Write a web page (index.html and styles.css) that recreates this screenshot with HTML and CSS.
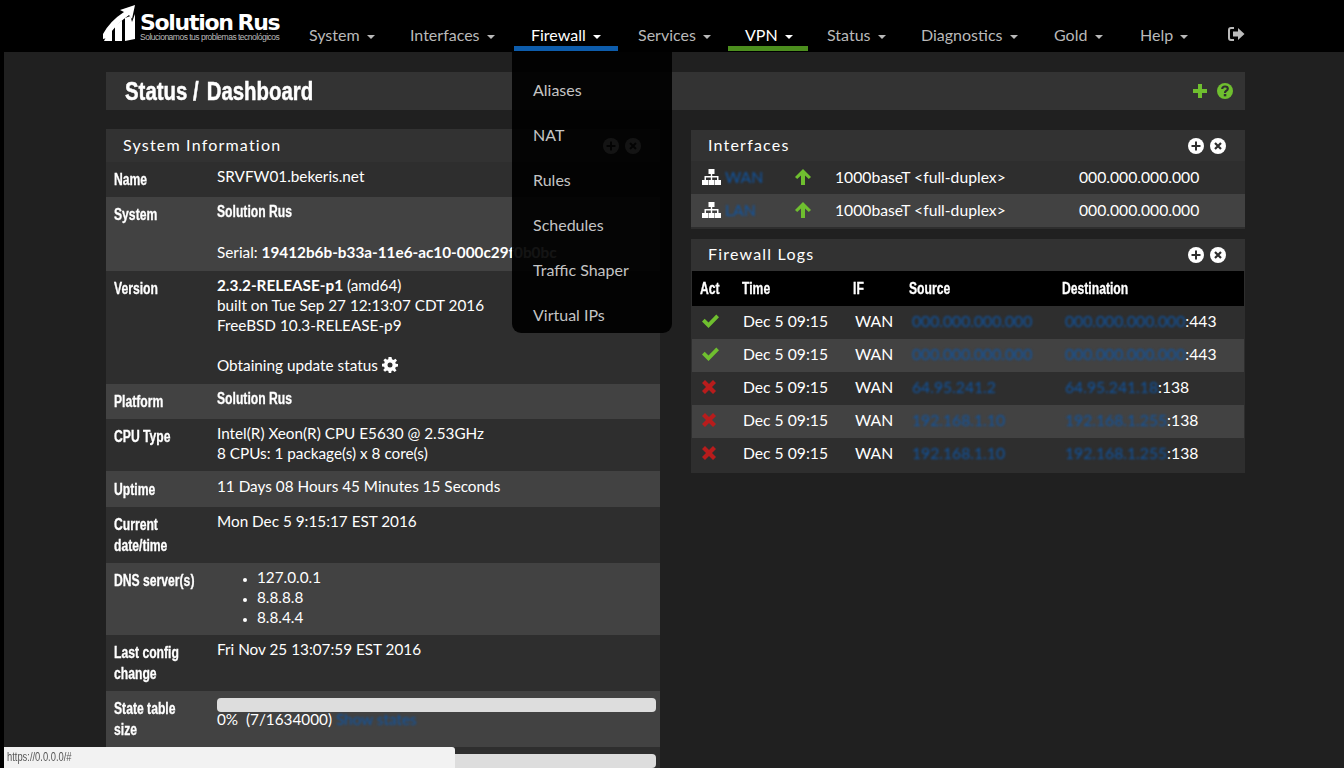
FILE: index.html
```html
<!DOCTYPE html>
<html lang="en">
<head>
    <meta charset="UTF-8">
    <meta name="viewport" content="width=device-width, initial-scale=1.0">
    <title>Status / Dashboard</title>
    <link rel="stylesheet" href="styles.css">
</head>
<body>
    <header class="topbar">
        <a class="logo" href="#">
            <svg class="logo-mark" width="33" height="37" viewBox="0 0 33 37">
                <path fill="#fff" d="M0 29 Q7 16 21 7 L17 5 L32 0 L29 14 L26 10 Q12 20 4 33 L0 34 Z"/>
                <path fill="#fff" d="M1 36 L2 34 Q5 28 9 24 V36 Z M12 36 V21 L19 15.500 V36 Z M22 36 V13 L27.500 11 L29 17 L32 9 V34 Z"/>
            </svg>
            <span class="logo-text">
                <span class="logo-name">Solution<span class="logo-rus">Rus</span></span>
                <span class="logo-tag">Solucionamos tus problemas tecnológicos</span>
            </span>
        </a>
        <nav class="menu">
            <a class="menu-item" href="#">System <i class="caret"></i></a>
            <a class="menu-item" href="#">Interfaces <i class="caret"></i></a>
            <a class="menu-item is-open" href="#">Firewall <i class="caret"></i></a>
            <a class="menu-item" href="#">Services <i class="caret"></i></a>
            <a class="menu-item is-vpn" href="#">VPN <i class="caret"></i></a>
            <a class="menu-item" href="#">Status <i class="caret"></i></a>
            <a class="menu-item" href="#">Diagnostics <i class="caret"></i></a>
            <a class="menu-item" href="#">Gold <i class="caret"></i></a>
            <a class="menu-item" href="#">Help <i class="caret"></i></a>
            <a class="menu-item menu-exit" href="#">
                <svg width="17" height="14" viewBox="0 0 17 14">
                    <path fill="none" stroke="#bbb" stroke-width="2" d="M6 1 H3 Q1 1 1 3 V11 Q1 13 3 13 H6"/>
                    <path fill="#bbb" d="M5 4.500 H10 V1 L16.500 7 L10 13 V9.500 H5 Z"/>
                </svg>
            </a>
        </nav>
    </header>

    <div class="dropdown">
        <a href="#">Aliases</a>
        <a href="#">NAT</a>
        <a href="#">Rules</a>
        <a href="#">Schedules</a>
        <a href="#">Traffic Shaper</a>
        <a href="#">Virtual IPs</a>
    </div>

    <main class="page">
        <div class="titlebar">
            <h1>Status / <span class="crumb">Dashboard</span></h1>
            <div class="title-icons">
                <svg width="16" height="16" viewBox="0 0 16 16"><path fill="#6fbf2f" d="M6 1 H10 V6 H15 V10 H10 V15 H6 V10 H1 V6 H6 Z"/></svg>
                <svg width="16" height="16" viewBox="0 0 16 16"><circle cx="8" cy="8" r="8" fill="#6fbf2f"/><path fill="none" stroke="#2f2f2f" stroke-width="2.200" d="M5.200 6 Q5.400 3.500 8 3.500 Q10.800 3.500 10.800 5.800 Q10.800 7.200 9 8 Q8 8.500 8 10"/><rect x="6.800" y="11" width="2.500" height="2.300" fill="#2f2f2f"/></svg>
            </div>
        </div>

        <div class="columns">
            <section class="panel">
                <div class="panel-head">
                    <h2>System Information</h2>
                    <div class="panel-icons">
                        <svg width="16" height="16" viewBox="0 0 16 16"><circle cx="8" cy="8" r="8" fill="#fff"/><path fill="#2e2e2e" d="M7 3.500 H9 V7 H12.500 V9 H9 V12.500 H7 V9 H3.500 V7 H7 Z"/></svg>
                        <svg width="16" height="16" viewBox="0 0 16 16"><circle cx="8" cy="8" r="8" fill="#fff"/><path stroke="#2e2e2e" stroke-width="2.200" d="M5 5 L11 11 M11 5 L5 11"/></svg>
                    </div>
                </div>
                <div class="info-row">
                    <div class="info-label">Name</div>
                    <div>SRVFW01.bekeris.net</div>
                </div>
                <div class="info-row">
                    <div class="info-label">System</div>
                    <div><span class="cond">Solution Rus</span><br><br>Serial: <b>19412b6b-b33a-11e6-ac10-000c29f0b0bc</b></div>
                </div>
                <div class="info-row">
                    <div class="info-label">Version</div>
                    <div>
                        <b>2.3.2-RELEASE-p1</b> (amd64)<br>
                        built on Tue Sep 27 12:13:07 CDT 2016<br>
                        FreeBSD 10.3-RELEASE-p9<br><br>
                        Obtaining update status
                        <svg class="gear" width="16" height="16" viewBox="0 0 16 16">
                            <path fill="#fff" fill-rule="evenodd" d="M6.500 0 H9.500 L10 2.300 L11.500 3 L13.600 1.800 L15 3.800 L13.300 5.300 L13.700 6.800 L16 7 V9.500 L13.700 10 L13.200 11.400 L14.500 13.400 L12.600 15 L10.900 13.400 L9.500 14 L9.200 16 H6.800 L6.300 14 L4.900 13.400 L3 14.800 L1.200 12.900 L2.700 11.200 L2.100 9.800 L0 9.400 V6.800 L2.200 6.400 L2.800 5 L1.400 3.200 L3.200 1.500 L5.100 2.800 L6.300 2.200 Z M8 5.500 A2.500 2.500 0 1 0 8 10.500 A2.500 2.500 0 1 0 8 5.500 Z"/>
                        </svg>
                    </div>
                </div>
                <div class="info-row">
                    <div class="info-label">Platform</div>
                    <div><span class="cond">Solution Rus</span></div>
                </div>
                <div class="info-row row-tight">
                    <div class="info-label">CPU Type</div>
                    <div>Intel(R) Xeon(R) CPU E5630 @ 2.53GHz<br>8 CPUs: 1 package(s) x 8 core(s)</div>
                </div>
                <div class="info-row row-loose">
                    <div class="info-label">Uptime</div>
                    <div>11 Days 08 Hours 45 Minutes 15 Seconds</div>
                </div>
                <div class="info-row">
                    <div class="info-label">Current date/time</div>
                    <div>Mon Dec 5 9:15:17 EST 2016</div>
                </div>
                <div class="info-row row-tight">
                    <div class="info-label">DNS server(s)</div>
                    <ul class="dns">
                        <li>127.0.0.1</li>
                        <li>8.8.8.8</li>
                        <li>8.8.4.4</li>
                    </ul>
                </div>
                <div class="info-row">
                    <div class="info-label">Last config change</div>
                    <div>Fri Nov 25 13:07:59 EST 2016</div>
                </div>
                <div class="info-row">
                    <div class="info-label">State table size</div>
                    <div>
                        <div class="bar"></div>
                        0%&nbsp; (7/1634000) <a class="link hazy" href="#">Show states</a>
                    </div>
                </div>
                <div class="info-row info-last">
                    <div><div class="bar"></div></div>
                </div>
            </section>

            <div class="side">
                <section class="panel">
                    <div class="panel-head">
                        <h2>Interfaces</h2>
                        <div class="panel-icons">
                            <svg width="16" height="16" viewBox="0 0 16 16"><circle cx="8" cy="8" r="8" fill="#fff"/><path fill="#2e2e2e" d="M7 3.500 H9 V7 H12.500 V9 H9 V12.500 H7 V9 H3.500 V7 H7 Z"/></svg>
                            <svg width="16" height="16" viewBox="0 0 16 16"><circle cx="8" cy="8" r="8" fill="#fff"/><path stroke="#2e2e2e" stroke-width="2.200" d="M5 5 L11 11 M11 5 L5 11"/></svg>
                        </div>
                    </div>
                    <div class="if-row">
                        <div class="if-name">
                            <svg width="19" height="16" viewBox="0 0 19 16"><path fill="#fff" d="M6.500 0 H12.500 V5 H10.200 V7 H16.500 V11 H19 V16 H13 V11 H15 V8.500 H10.200 V11 H12.500 V16 H6.500 V11 H8.800 V8.500 H4 V11 H6 V16 H0 V11 H2.500 V7 H8.800 V5 H6.500 Z"/></svg>
                            <a class="link hazy" href="#">WAN</a>
                        </div>
                        <svg class="arrow" width="16" height="16" viewBox="0 0 16 16"><path fill="#6fbf2f" d="M8 0 L16 8 L13.800 10 L10 6.400 V16 H6 V6.400 L2.200 10 L0 8 Z"/></svg>
                        <div>1000baseT &lt;full-duplex&gt;</div>
                        <div>000.000.000.000</div>
                    </div>
                    <div class="if-row">
                        <div class="if-name">
                            <svg width="19" height="16" viewBox="0 0 19 16"><path fill="#fff" d="M6.500 0 H12.500 V5 H10.200 V7 H16.500 V11 H19 V16 H13 V11 H15 V8.500 H10.200 V11 H12.500 V16 H6.500 V11 H8.800 V8.500 H4 V11 H6 V16 H0 V11 H2.500 V7 H8.800 V5 H6.500 Z"/></svg>
                            <a class="link hazy" href="#">LAN</a>
                        </div>
                        <svg class="arrow" width="16" height="16" viewBox="0 0 16 16"><path fill="#6fbf2f" d="M8 0 L16 8 L13.800 10 L10 6.400 V16 H6 V6.400 L2.200 10 L0 8 Z"/></svg>
                        <div>1000baseT &lt;full-duplex&gt;</div>
                        <div>000.000.000.000</div>
                    </div>
                </section>

                <section class="panel">
                    <div class="panel-head log-title">
                        <h2>Firewall Logs</h2>
                        <div class="panel-icons">
                            <svg width="16" height="16" viewBox="0 0 16 16"><circle cx="8" cy="8" r="8" fill="#fff"/><path fill="#2e2e2e" d="M7 3.500 H9 V7 H12.500 V9 H9 V12.500 H7 V9 H3.500 V7 H7 Z"/></svg>
                            <svg width="16" height="16" viewBox="0 0 16 16"><circle cx="8" cy="8" r="8" fill="#fff"/><path stroke="#2e2e2e" stroke-width="2.200" d="M5 5 L11 11 M11 5 L5 11"/></svg>
                        </div>
                    </div>
                    <div class="log-row log-head">
                        <div><span>Act</span></div><div><span>Time</span></div><div><span>IF</span></div><div><span>Source</span></div><div><span>Destination</span></div>
                    </div>
                    <div class="log-row">
                        <div><svg width="17" height="14" viewBox="0 0 17 14"><path fill="#6fbf2f" d="M0 7.500 L2.700 4.800 L6.500 8.500 L14.300 0.500 L17 3.200 L6.500 14 Z"/></svg></div>
                        <div>Dec 5 09:15</div><div>WAN</div>
                        <div><a class="link hazy" href="#">000.000.000.000</a></div>
                        <div><a class="link hazy" href="#">000.000.000.000</a>:443</div>
                    </div>
                    <div class="log-row">
                        <div><svg width="17" height="14" viewBox="0 0 17 14"><path fill="#6fbf2f" d="M0 7.500 L2.700 4.800 L6.500 8.500 L14.300 0.500 L17 3.200 L6.500 14 Z"/></svg></div>
                        <div>Dec 5 09:15</div><div>WAN</div>
                        <div><a class="link hazy" href="#">000.000.000.000</a></div>
                        <div><a class="link hazy" href="#">000.000.000.000</a>:443</div>
                    </div>
                    <div class="log-row">
                        <div><svg class="cross" width="14" height="14" viewBox="0 0 14 14"><path fill="#b81c1c" d="M0 3 L3 0 L7 4 L11 0 L14 3 L10 7 L14 11 L11 14 L7 10 L3 14 L0 11 L4 7 Z"/></svg></div>
                        <div>Dec 5 09:15</div><div>WAN</div>
                        <div><a class="link hazy" href="#">64.95.241.2</a></div>
                        <div><a class="link hazy" href="#">64.95.241.18</a>:138</div>
                    </div>
                    <div class="log-row">
                        <div><svg class="cross" width="14" height="14" viewBox="0 0 14 14"><path fill="#b81c1c" d="M0 3 L3 0 L7 4 L11 0 L14 3 L10 7 L14 11 L11 14 L7 10 L3 14 L0 11 L4 7 Z"/></svg></div>
                        <div>Dec 5 09:15</div><div>WAN</div>
                        <div><a class="link hazy" href="#">192.168.1.10</a></div>
                        <div><a class="link hazy" href="#">192.168.1.255</a>:138</div>
                    </div>
                    <div class="log-row">
                        <div><svg class="cross" width="14" height="14" viewBox="0 0 14 14"><path fill="#b81c1c" d="M0 3 L3 0 L7 4 L11 0 L14 3 L10 7 L14 11 L11 14 L7 10 L3 14 L0 11 L4 7 Z"/></svg></div>
                        <div>Dec 5 09:15</div><div>WAN</div>
                        <div><a class="link hazy" href="#">192.168.1.10</a></div>
                        <div><a class="link hazy" href="#">192.168.1.255</a>:138</div>
                    </div>
                </section>
            </div>
        </div>
    </main>

    <div class="statusbar"><span>https://0.0.0.0/#</span></div>
</body>
</html>
```

FILE: styles.css
```css
html, body {
    height: 100%;
}
body {
    margin: 0;
    height: 768px;
    overflow: hidden;
    position: relative;
    background: #000;
    color: #fff;
    font-family: "Lato", "Liberation Sans", sans-serif;
    font-size: 15.300px;
    line-height: 20px;
}
a {
    color: inherit;
    text-decoration: none;
}
b {
    font-weight: 700;
}

/* top navigation */
.topbar {
    height: 52px;
    display: flex;
    background: #000;
}
.logo {
    flex: none;
    width: 189px;
    margin-left: 103px;
    display: flex;
    gap: 4px;
    padding-top: 5px;
    box-sizing: border-box;
}
.logo-mark {
    flex: none;
}
.logo-text {
    display: flex;
    flex-direction: column;
    padding-top: 7px;
    white-space: nowrap;
}
.logo-name {
    font-family: "DejaVu Sans", sans-serif;
    font-weight: 700;
    font-size: 22px;
    line-height: 21px;
    letter-spacing: -1.300px;
}
.logo-rus {
    margin-left: 5px;
}
.logo-tag {
    font-family: "Liberation Sans", sans-serif;
    font-size: 8.500px;
    line-height: 8px;
    letter-spacing: -0.5px;
    color: #bbb;
}
.menu {
    display: grid;
    grid-template-columns: 101px 121px 107px 107px 82px 94px 133px 86px 83px auto;
}
.menu-item {
    padding: 24px 0 0 17px;
    box-sizing: border-box;
    height: 51px;
    color: #b9b9b9;
    font-size: 16px;
    line-height: 22px;
    white-space: nowrap;
    border-bottom: 5px solid transparent;
}
.menu-item.is-open {
    color: #fff;
    border-bottom-color: #0d5cab;
    margin-right: 3px;
}
.menu-item.is-vpn {
    color: #fff;
    border-bottom-color: #4c8e1e;
    margin-right: 2px;
}
.menu-exit {
    padding-left: 22px;
}
.caret {
    display: inline-block;
    margin-left: 3px;
    vertical-align: 2px;
    border-top: 4px solid currentColor;
    border-left: 4px solid transparent;
    border-right: 4px solid transparent;
}

/* firewall menu, open over the page */
.dropdown {
    position: absolute;
    left: 512px;
    top: 52px;
    z-index: 5;
    width: 160px;
    height: 281px;
    box-sizing: border-box;
    padding-top: 15px;
    background: rgba(0, 0, 0, 0.92);
    border-radius: 0 0 9px 9px;
}
.dropdown a {
    display: block;
    height: 45px;
    padding-left: 21px;
    color: #c4c4c4;
    font-size: 16px;
    line-height: 45px;
}

/* page */
.page {
    margin-left: 4px;
    padding: 20px 0 0 102px;
    height: 696px;
    background: #202020;
}
.titlebar {
    width: 1139px;
    height: 38px;
    box-sizing: border-box;
    padding: 0 12px 0 19px;
    display: flex;
    justify-content: space-between;
    align-items: center;
    background: #333;
}
.titlebar h1 {
    margin: 0;
    font-family: "Liberation Sans", sans-serif;
    font-size: 26.500px;
    font-weight: 700;
    white-space: nowrap;
    -webkit-text-stroke: 0.5px #fff;
    transform: scaleX(0.77);
    transform-origin: left center;
}
.crumb {
    margin-left: 3px;
}
.title-icons {
    display: flex;
    gap: 9px;
}
.columns {
    display: grid;
    grid-template-columns: 554px 554px;
    gap: 31px;
    margin-top: 19px;
}
.side {
    display: flex;
    flex-direction: column;
    gap: 10px;
    padding-top: 1px;
    font-size: 15.700px;
}
.panel {
    background: #2e2e2e;
    align-self: start;
    width: 100%;
}
.panel-head {
    height: 33px;
    box-sizing: border-box;
    padding: 0 19px 1px 17px;
    display: flex;
    justify-content: space-between;
    align-items: center;
    background: #323232;
}
.panel-head h2 {
    margin: 0;
    font-size: 16px;
    font-weight: 400;
    letter-spacing: 1.200px;
}
.panel-icons {
    display: flex;
    gap: 6px;
    margin-top: 2px;
}
.side .panel-head {
    height: 31px;
    padding-bottom: 2px;
}
.side .log-title {
    height: 32px;
    padding-bottom: 3px;
}

/* system information rows */
.info-row {
    display: grid;
    grid-template-columns: 103px 1fr;
    padding: 4px 4px 9px 8px;
    background: #2e2e2e;
}
.info-row:nth-child(odd) {
    background: #424242;
}
.info-row.row-tight {
    padding-bottom: 8px;
}
.info-row.row-loose {
    padding-top: 5px;
}
.info-row > div:last-child,
.dns {
    min-width: 0;
    white-space: nowrap;
}
.info-last > div:last-child {
    grid-column: 2;
}
.info-label,
.cond,
.log-head span {
    font-family: "Liberation Sans", sans-serif;
    font-size: 16px;
    font-weight: 700;
    -webkit-text-stroke: 0.3px #fff;
    transform: scaleX(0.76);
    transform-origin: left center;
}
.info-label {
    width: 108px;
    padding-top: 3px;
    margin-bottom: -2px;
    line-height: 21px;
}
.cond,
.log-head span {
    display: inline-block;
}
.gear {
    vertical-align: -2px;
}
.dns {
    margin: 0;
    padding-left: 40px;
}
.dns li::marker {
    font-size: 11px;
}
.bar {
    height: 14px;
    margin-top: 3px;
    margin-bottom: -3px;
    background: #ddd;
    border-radius: 4px;
}
.link {
    color: #0f55a3;
}
.hazy {
    filter: blur(1px);
}

/* interfaces widget */
.if-row {
    display: grid;
    grid-template-columns: 93px 40px 244px 1fr;
    align-items: center;
    height: 33px;
    box-sizing: border-box;
    padding: 0 0 2px 11px;
}
.if-row:nth-child(odd) {
    background: #424242;
}
.if-row:last-child {
    margin-bottom: 2px;
}
.if-name {
    display: flex;
    align-items: center;
    gap: 4px;
}

/* firewall logs widget */
.log-row {
    display: grid;
    grid-template-columns: 50px 111px 56px 153px 1fr;
    align-items: center;
    height: 33px;
    box-sizing: border-box;
    padding-bottom: 3px;
    margin: 0 1px;
}
.log-row > div {
    padding-left: 1px;
}
.log-row > div:first-child {
    padding-left: 10px;
    display: flex;
}
.log-row > div:nth-child(3) {
    padding-left: 2px;
}
.log-row > div:nth-child(4),
.log-row > div:nth-child(5) {
    padding-left: 3px;
}
.log-row:nth-child(even) {
    background: #424242;
}
.log-row:last-child {
    margin-bottom: 2px;
}
.log-row.log-head {
    height: 35px;
    padding: 0;
    background: #000;
}
.log-row.log-head > div {
    padding-left: 0;
}
.log-row.log-head > div:first-child {
    padding-left: 8px;
}

/* browser link preview */
.statusbar {
    position: absolute;
    left: 4px;
    bottom: 0;
    z-index: 6;
    width: 451px;
    height: 21px;
    box-sizing: border-box;
    padding-left: 3px;
    background: #f2f2f2;
    border-top-right-radius: 3px;
    color: #555;
    font-family: "Liberation Sans", sans-serif;
    font-size: 12px;
    line-height: 21px;
}
.statusbar span {
    display: inline-block;
    transform: scaleX(0.78);
    transform-origin: left center;
}
```
